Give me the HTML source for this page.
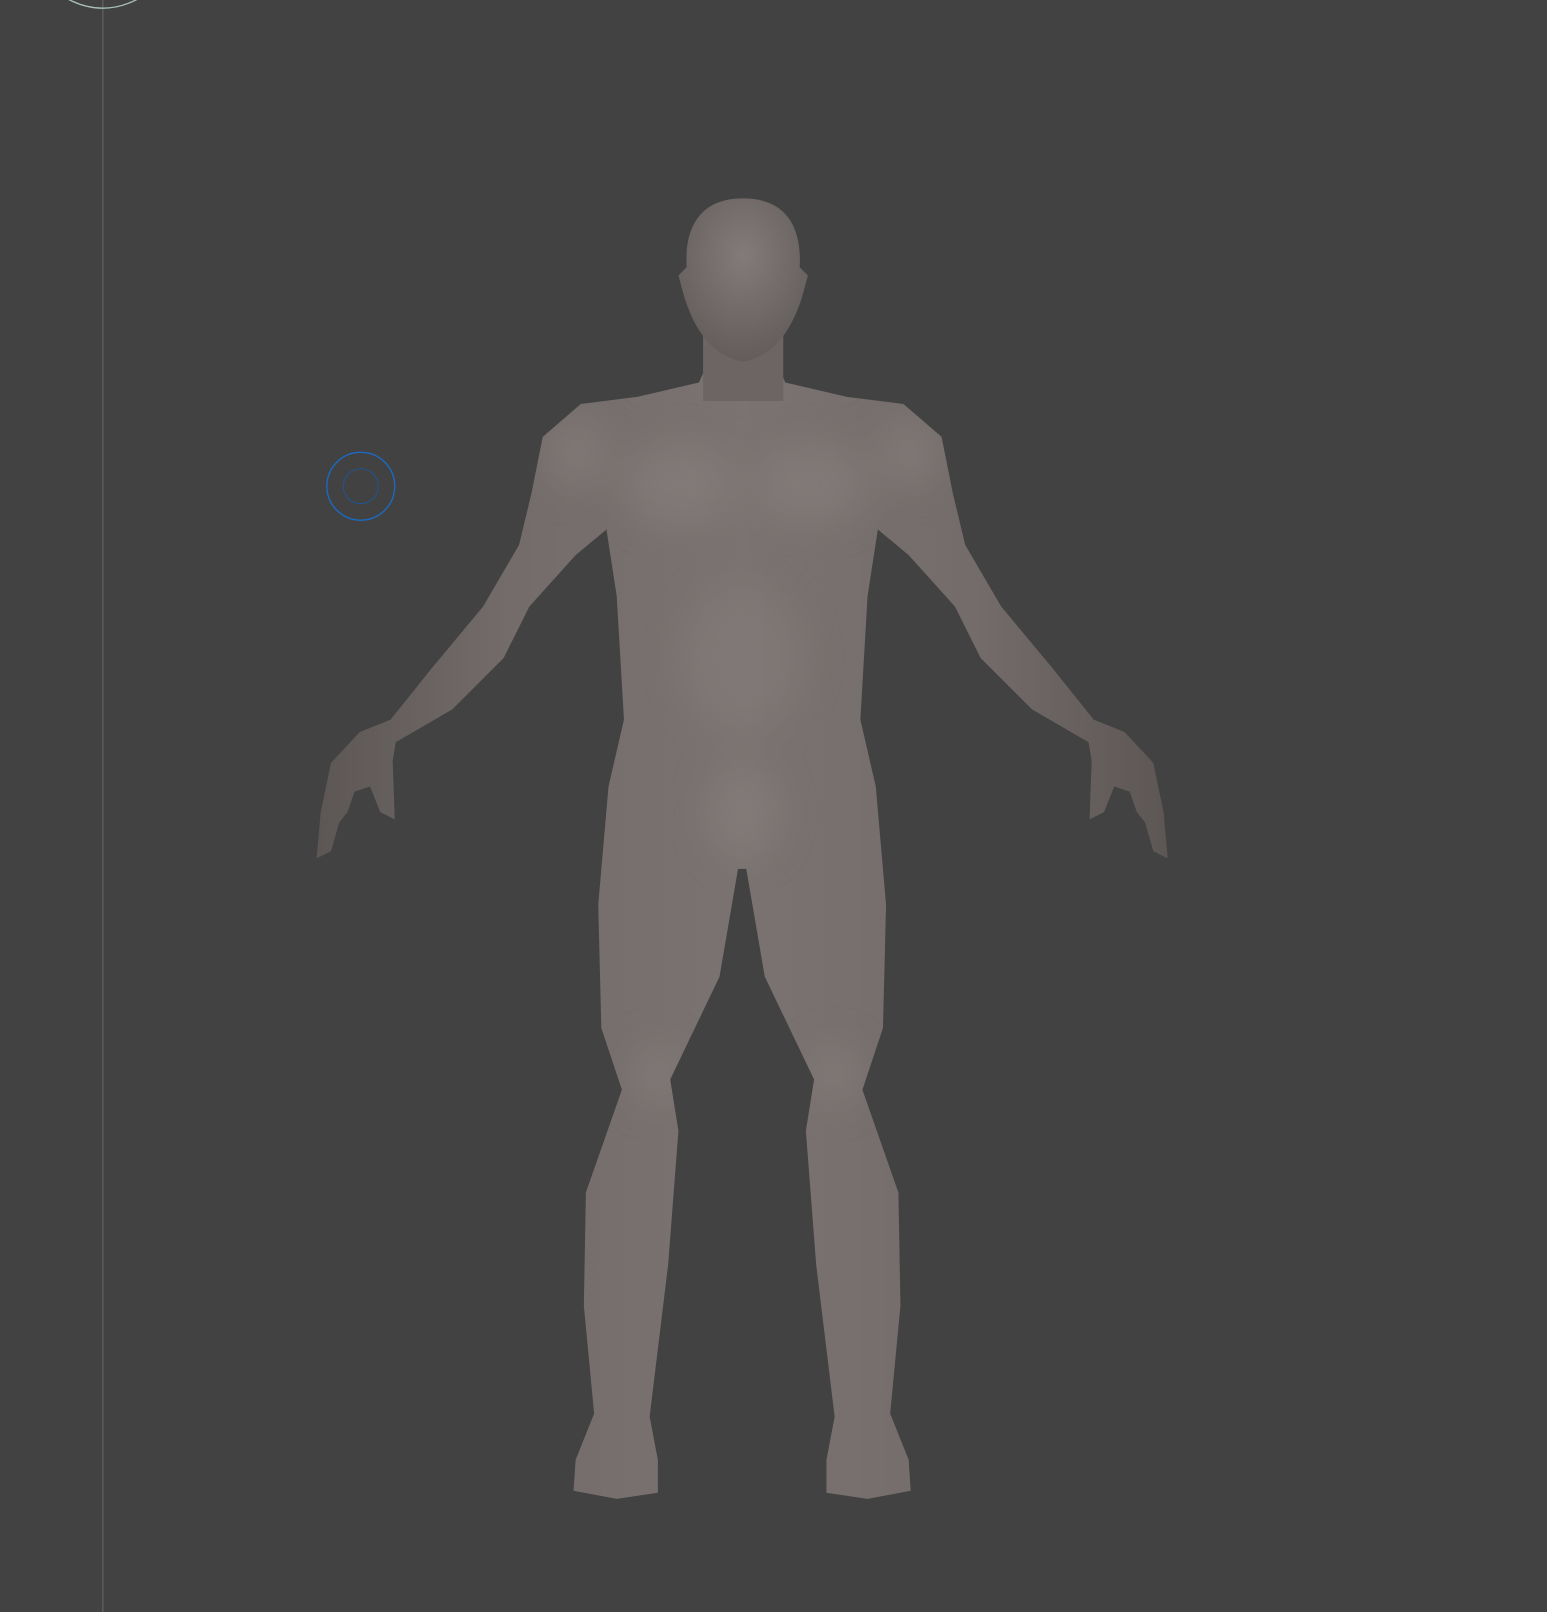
<!DOCTYPE html>
<html><head><meta charset="utf-8"><style>
html,body{margin:0;padding:0;background:#424242;overflow:hidden}
svg{display:block}
</style></head><body>
<svg width="1547" height="1612" viewBox="0 0 1505 1568" preserveAspectRatio="none">
<defs>
<linearGradient id="g" x1="0" y1="0" x2="1" y2="0">
<stop offset="0" stop-color="#5c5654"/><stop offset="0.45" stop-color="#736c6a"/><stop offset="1" stop-color="#7a7371"/>
</linearGradient>
<radialGradient id="h" cx="0.5" cy="0.35" r="0.65">
<stop offset="0" stop-color="#827b79"/><stop offset="1" stop-color="#625c5a"/>
</radialGradient>
<filter id="b" x="-50%" y="-50%" width="200%" height="200%"><feGaussianBlur stdDeviation="18"/></filter>
<path id="half" d="M726,345 L690,350 L680,372 L620,386 L565,393 L528,425 L517,480 L505,530 L470,590 L420,650 L380,700 L350,712 L322,742 L312,790 L308,835 L322,828 L330,800 L338,790 L345,770 L360,765 L370,790 L384,797 L382,740 L385,722 L440,690 L490,640 L515,590 L560,540 L590,515 L600,580 L607,700 L592,765 L582,880 L585,1000 L605,1060 L570,1160 L568,1270 L578,1375 L560,1420 L558,1450 L600,1458 L640,1452 L640,1420 L632,1378 L650,1230 L660,1100 L652,1050 L700,950 L718,845 L726,845 Z"/>
<clipPath id="c">
<use href="#half"/>
<use href="#half" transform="translate(1444,0) scale(-1,1)"/>
</clipPath>
</defs>
<rect width="1505" height="1568" fill="#424242"/>
<line x1="100" y1="0" x2="100" y2="1568" stroke="#5c5c5c" stroke-width="1.5"/>
<path d="M64,-2 Q100,18 136,-2" fill="none" stroke="#a8c0b8" stroke-width="1.3"/>
<circle cx="351" cy="473" r="33" fill="none" stroke="#1b6ac4" stroke-width="1.3"/>
<circle cx="351" cy="473" r="17" fill="none" stroke="#1f5590" stroke-width="1"/>
<g fill="url(#g)">
<use href="#half"/>
<use href="#half" transform="translate(1444,0) scale(-1,1)"/>
</g>
<g clip-path="url(#c)">
<g filter="url(#b)" opacity="0.5">
<ellipse cx="660" cy="470" rx="55" ry="40" fill="#8a8381"/>
<ellipse cx="790" cy="470" rx="55" ry="40" fill="#8a8381"/>
<ellipse cx="723" cy="640" rx="60" ry="70" fill="#857e7c"/>
<ellipse cx="723" cy="790" rx="35" ry="45" fill="#8a8381"/>
<ellipse cx="640" cy="1045" rx="25" ry="30" fill="#8a8381"/>
<ellipse cx="812" cy="1045" rx="25" ry="30" fill="#8a8381"/>
<ellipse cx="560" cy="440" rx="30" ry="35" fill="#8a8381"/>
<ellipse cx="885" cy="440" rx="30" ry="35" fill="#8a8381"/>
</g>
</g>
<rect x="684" y="320" width="78" height="70" fill="#6c6563"/>
<path d="M723,193 C768,193 780,225 778,260 L786,268 L780,290 C770,320 755,345 723,352 C691,345 676,320 666,290 L660,268 L668,260 C666,225 678,193 723,193 Z" fill="url(#h)"/>
</svg>
</body></html>
